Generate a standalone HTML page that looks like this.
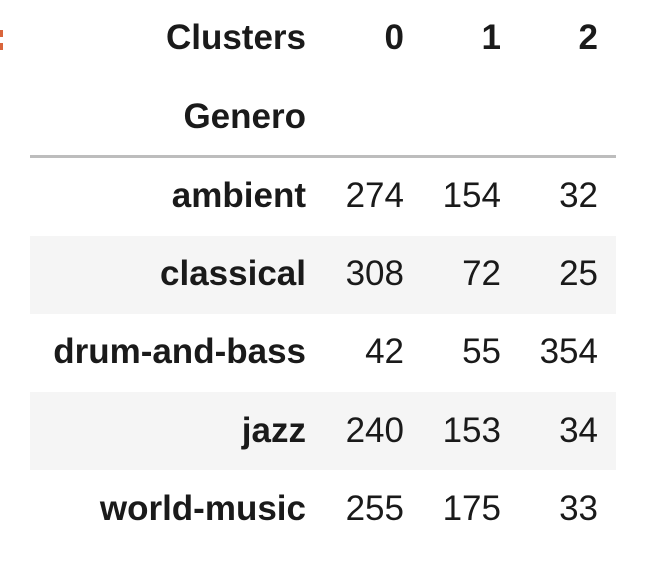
<!DOCTYPE html><html><head><style>
body{margin:0;width:666px;height:576px;background:#fff;font-family:"Liberation Sans",Arial,sans-serif;color:#1a1a1a;position:relative;overflow:hidden}
.t{position:absolute;font-size:35px;line-height:40px;text-align:right;white-space:nowrap}
.b{font-weight:bold}
.s{position:absolute;left:30px;width:586px;height:78px;background:#f5f5f5}
</style></head><body>
<div style="position:absolute;left:0;top:30px;width:3px;height:7px;background:#d9653b"></div>
<div style="position:absolute;left:0;top:43px;width:3px;height:7px;background:#d9653b"></div>
<div style="position:absolute;left:30px;top:155px;width:586px;height:3px;background:#bdbdbd"></div>
<div class="s" style="top:236px"></div>
<div class="s" style="top:392px"></div>
<div class="t b" style="right:360px;top:18px">Clusters</div>
<div class="t b" style="right:262px;top:18px">0</div>
<div class="t b" style="right:165px;top:18px">1</div>
<div class="t b" style="right:68px;top:18px">2</div>
<div class="t b" style="right:360px;top:97px">Genero</div>

<div class="t b" style="right:360px;top:176px">ambient</div>
<div class="t" style="right:262px;top:176px">274</div>
<div class="t" style="right:165px;top:176px">154</div>
<div class="t" style="right:68px;top:176px">32</div>

<div class="t b" style="right:360px;top:254px">classical</div>
<div class="t" style="right:262px;top:254px">308</div>
<div class="t" style="right:165px;top:254px">72</div>
<div class="t" style="right:68px;top:254px">25</div>

<div class="t b" style="right:360px;top:332px">drum-and-bass</div>
<div class="t" style="right:262px;top:332px">42</div>
<div class="t" style="right:165px;top:332px">55</div>
<div class="t" style="right:68px;top:332px">354</div>

<div class="t b" style="right:360px;top:411px">jazz</div>
<div class="t" style="right:262px;top:411px">240</div>
<div class="t" style="right:165px;top:411px">153</div>
<div class="t" style="right:68px;top:411px">34</div>

<div class="t b" style="right:360px;top:489px">world-music</div>
<div class="t" style="right:262px;top:489px">255</div>
<div class="t" style="right:165px;top:489px">175</div>
<div class="t" style="right:68px;top:489px">33</div>
</body></html>
